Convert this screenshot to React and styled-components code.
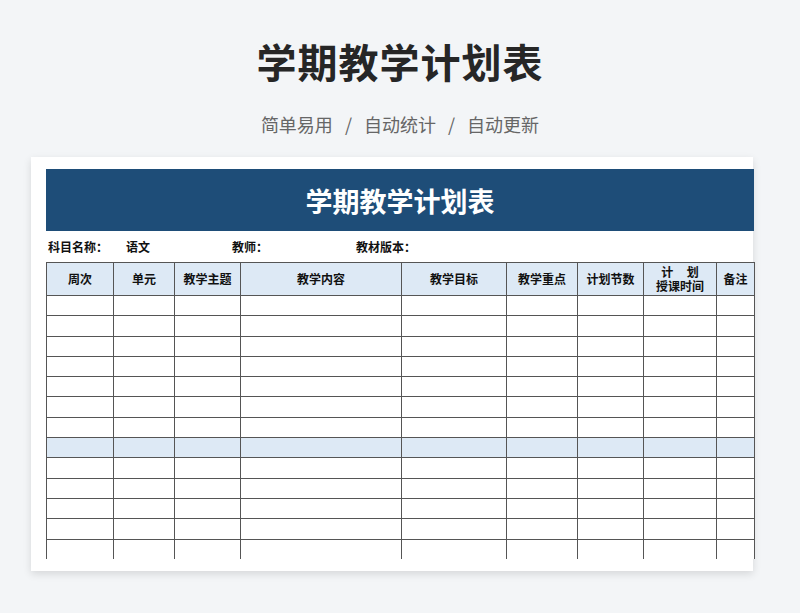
import React from 'react';
import styled, { createGlobalStyle } from 'styled-components';

const G = createGlobalStyle`
  body { margin: 0; background: #f3f5f7; font-family: "Noto Sans CJK SC", "Noto Sans", sans-serif; }
`;
const Page = styled.div`width: 800px; height: 613px; display: flex; flex-direction: column; align-items: center;`;
const Title = styled.h1`margin: 33px 0 0; height: 56px; font-size: 40px; line-height: 56px; font-weight: 700; color: #262626; letter-spacing: 1px;`;
const Sub = styled.div`margin-top: 23px; font-size: 18px; line-height: 24px; color: #666; word-spacing: 8px;`;
const Card = styled.div`margin-top: 21px; align-self: flex-start; margin-left: 31px; width: 722px; height: 414px; background: #fff; box-shadow: 0 3px 8px rgba(0,0,0,0.12); padding: 12px 0 0 15px; box-sizing: border-box;`;
const Band = styled.div`width: 708px; height: 62px; background: #1e4d78; color: #fff; font-size: 27px; font-weight: 700; display: flex; align-items: center; justify-content: center;`;
const Info = styled.div`height: 31px; display: flex; align-items: center; font-size: 12px; font-weight: 700; color: #111;`;
const InfoItem = styled.span`width: ${p => p.w}px; padding-left: 2px;`;
const Clip = styled.div`width: 709px; height: 297px; overflow: hidden;`;
const Table = styled.table`border-collapse: collapse; table-layout: fixed; width: 709px;`;
const Th = styled.th`border: 1px solid #555; background: #dde9f5; height: 32px; padding: 0; font-size: 12px; font-weight: 700; color: #111; line-height: 14px;`;
const Td = styled.td`border: 1px solid #555; height: 19.3px; padding: 0; background: ${p => p.hl ? '#dde9f5' : '#fff'};`;

const cols = [67, 61, 66, 161, 105, 71, 66, 73, 38];
const heads = ['周次', '单元', '教学主题', '教学内容', '教学目标', '教学重点', '计划节数', null, '备注'];

export default function App() {
  return (
    <Page>
      <G />
      <Title>学期教学计划表</Title>
      <Sub>简单易用 / 自动统计 / 自动更新</Sub>
      <Card>
        <Band>学期教学计划表</Band>
        <Info>
          <InfoItem w={76}>科目名称：</InfoItem>
          <InfoItem w={104}>语文</InfoItem>
          <InfoItem w={122}>教师：</InfoItem>
          <InfoItem w={100}>教材版本：</InfoItem>
        </Info>
        <Clip>
          <Table>
            <colgroup>{cols.map((w, i) => <col key={i} style={{ width: w }} />)}</colgroup>
            <thead>
              <tr>{heads.map((h, i) => <Th key={i}>{h ?? <>计&nbsp;&nbsp;&nbsp;&nbsp;&nbsp;划<br />授课时间</>}</Th>)}</tr>
            </thead>
            <tbody>
              {Array.from({ length: 14 }).map((_, r) => (
                <tr key={r}>{cols.map((_, i) => <Td key={i} hl={r === 7} />)}</tr>
              ))}
            </tbody>
          </Table>
        </Clip>
      </Card>
    </Page>
  );
}
